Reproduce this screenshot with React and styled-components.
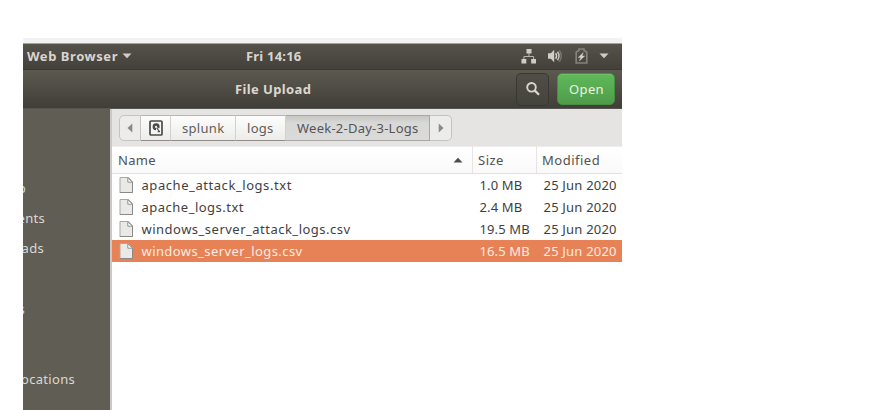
import React from "react";
import styled, { createGlobalStyle, css } from "styled-components";

const Global = createGlobalStyle`
  * { box-sizing: border-box; }
  body { margin: 0; background: #fff; overflow: hidden; }
`;

const Page = styled.main`
  width: 878px;
  height: 410px;
  padding: 38px 0 0 23px;
  font: 13px/18px "Noto Sans", "Open Sans", sans-serif;
  color: #4a4a4a;
  background: #fff;
  white-space: nowrap;
`;

const Screen = styled.div`
  width: 599px;
  height: 372px;
  overflow: hidden;
  display: flex;
  flex-direction: column;
`;

const Strip = styled.div`
  flex: none;
  height: 6px;
  background: #f3f3f3;
  border-bottom: 1px solid #a5a39e;
`;

const Label = styled.span`
  letter-spacing: ${(p) => p.$track ?? 0}px;
`;

const TopBar = styled.header`
  flex: none;
  height: 26px;
  display: grid;
  grid-template-columns: 223px 1fr 102px;
  align-items: center;
  padding: 0 0 1px 4px;
  color: #d8d5cf;
  font-weight: 700;
  background: linear-gradient(#55524a, #43413b);
  border-bottom: 1px solid #3a3833;
`;

const AppMenu = styled.div`
  display: flex;
  align-items: center;
  gap: 4px;
`;

const Clock = styled.div`
  margin-left: -4px;
`;

const Tray = styled.div`
  display: flex;
  align-items: center;
`;

const Icon = styled.svg`
  flex: none;
  display: block;
  margin-left: ${(p) => p.$gap ?? 0}px;
`;

const HeaderBar = styled.header`
  flex: none;
  height: 39px;
  display: grid;
  grid-template-columns: 1fr 33px 58px;
  column-gap: 8px;
  align-items: center;
  padding: 0 7px 0 0;
  background: linear-gradient(#5c594f, #403e38);
  border-bottom: 1px solid #56544e;
`;

const Title = styled.h1`
  margin: 0;
  padding-left: 212px;
  font: inherit;
  font-weight: 700;
  color: #dcd8d0;
`;

const SearchButton = styled.button`
  height: 33px;
  padding: 0 0 1px 1px;
  display: flex;
  align-items: center;
  justify-content: center;
  border: 1px solid #393732;
  border-radius: 5px;
  background: linear-gradient(#504e46, #45433d);
`;

const OpenButton = styled.button`
  height: 32px;
  padding: 0 0 0 1px;
  font: inherit;
  color: #eaf5e6;
  border: 1px solid #48903f;
  border-radius: 5px;
  background: linear-gradient(#5fb95a, #4f9c4a);
  box-shadow: inset 0 1px #6cc267;
`;

const Body = styled.div`
  flex: 1;
  display: grid;
  grid-template-columns: 89px 1fr;
`;

const Sidebar = styled.nav`
  background: #605d54;
  border-right: 2px solid #cbc8c5;
  color: #dbd8d1;
  display: flex;
  flex-direction: column;
  align-items: flex-start;
`;

const Place = styled.div`
  width: ${(p) => p.$width}px;
  height: 18px;
  margin-top: ${(p) => p.$before}px;
  display: flex;
  justify-content: flex-end;
  overflow: hidden;
`;

const Main = styled.section`
  min-width: 0;
  background: #fff;
`;

const PathBar = styled.div`
  height: 38px;
  padding: 6px 0 0 7px;
  background: #e5e4e2;
  border-bottom: 1px solid #ededec;
`;

const Path = styled.div`
  width: 333px;
  height: 26px;
  display: grid;
  grid-template-columns: 22px 30px 65px 50px 144px 22px;
`;

const Crumb = styled.button`
  padding: 0 0 0 ${(p) => p.$inset ?? 0}px;
  font: inherit;
  color: #5f5e5b;
  display: flex;
  align-items: center;
  justify-content: ${(p) => (p.$inset ? "flex-start" : "center")};
  border: 1px solid #b8b5b1;
  border-bottom-color: #908d89;
  border-left-width: 0;
  border-right-color: #d3d0cd;
  background: linear-gradient(#fdfdfd, #ececea);

  ${(p) => p.$current && css`
    background: linear-gradient(#c6c6c5, #d8d8d7 7px, #dadad9);
    border-color: #a9a7a4;
    color: #555;
  `}

  ${(p) => p.$end && css`
    background: #ececeb;
    border-color: #c5c3c0;
    border-radius: ${p.$end === "left" ? "5px 0 0 5px" : "0 5px 5px 0"};
    border-left-width: ${p.$end === "left" ? 1 : 0}px;
  `}
`;

const columns = css`
  display: grid;
  grid-template-columns: 360px 64px 1fr;
`;

const ColumnHeads = styled.div`
  ${columns}
  height: 27px;
  background: linear-gradient(#fff, #fafafa);
  border-bottom: 1px solid #e2e1e0;
`;

const Head = styled.div`
  display: flex;
  align-items: center;
  justify-content: space-between;
  padding: 0 9px 1px ${(p) => p.$inset}px;
  color: #525252;
  border-left: ${(p) => (p.$ruled ? "1px solid #e6e5e4" : "0")};
`;

const Rows = styled.div`
  padding-top: 0;
`;

const FileRow = styled.div`
  ${columns}
  height: 22px;
  align-items: center;
  padding-bottom: 1px;
  color: ${(p) => (p.$selected ? "#fdeae1" : "#3f3f3f")};
  background: ${(p) => (p.$selected ? "#e78256" : "transparent")};
`;

const FileName = styled.div`
  display: flex;
  align-items: center;
  gap: 7.5px;
  padding-left: 7px;
`;

const Cell = styled.div`
  padding-left: ${(p) => p.$inset}px;
`;

const Caret = ({ color = "#d0cdc7", up, gap }) => (
  <Icon width="10" height="6" viewBox="0 0 10 6" $gap={gap}>
    <path d={up ? "M0.5 5.5 5 0.8 9.5 5.5Z" : "M0.5 0.5 5 5.3 9.5 0.5Z"} fill={color} />
  </Icon>
);

const SideArrow = ({ left }) => (
  <Icon width="6" height="10" viewBox="0 0 6 10">
    <path d={left ? "M5.3 0.5V9.5L0.5 5Z" : "M0.7 0.5V9.5L5.5 5Z"} fill="#8b8985" />
  </Icon>
);

const NetworkIcon = () => (
  <Icon width="16" height="16" viewBox="0 0 16 16" fill="#d0cdc7" $gap={1}>
    <path d="M5.5 1h5v4.5h-5zM.5 11h4.8v4.5H.5zM10.2 11H15v4.5h-4.8z" />
    <path d="M8 5v3.5M2.9 11V8.5h9.7V11" fill="none" stroke="#b7b4ad" strokeWidth="1" />
  </Icon>
);

const VolumeIcon = () => (
  <Icon width="16" height="16" viewBox="0 0 16 16" $gap={10} fill="none">
    <path d="M1 5.2h2.8L7.2 1.8v12.4L3.8 10.8H1z" fill="#d0cdc7" />
    <path d="M8.7 5.2q1.7 2.8 0 5.6" stroke="#d0cdc7" strokeWidth="1.5" />
    <path d="M10.5 3.8q3 4.2 0 8.4" stroke="#c5c2bb" strokeWidth="1.5" />
    <path d="M12.3 2.2q4 5.8 0 11.6" stroke="#77746c" strokeWidth="1.5" />
  </Icon>
);

const BatteryIcon = () => (
  <Icon width="13" height="16" viewBox="0 0 13 16" $gap={12}>
    <path d="M4 2.3V1h5v1.3l2.8 1.9V15H1.2V4.2z" fill="none" stroke="#85827a" strokeWidth="1.7" />
    <path d="M8.3 4.6 3.2 9.5h2.6L4.3 13l5.4-5H7.1z" fill="#d5d2cb" stroke="#d5d2cb" strokeWidth=".4" />
  </Icon>
);

const SearchIcon = () => (
  <Icon width="14" height="14" viewBox="0 0 14 14" fill="none" stroke="#d9d5cd">
    <circle cx="5.5" cy="5.3" r="4.3" strokeWidth="1.9" />
    <path d="m8.6 8.4 4.4 4.4" strokeWidth="2.3" />
  </Icon>
);

const DiskIcon = () => (
  <Icon width="14" height="16" viewBox="0 0 14 16">
    <rect x="1" y="1" width="12" height="14" rx="1" fill="#f5f5f4" stroke="#4b4b4b" strokeWidth="1.7" />
    <path d="M7 10.2A3.5 3.5 0 1 1 10.6 7c0 .7-.2 1.1-.5 1.5L7.3 6.8z" fill="#4b4b4b" />
    <path d="m7.1 7 3.6 4.8M8.6 11.8h2.4" stroke="#4b4b4b" strokeWidth="1.1" />
    <circle cx="7" cy="6.9" r="1.1" fill="#f5f5f4" />
  </Icon>
);

const FileIcon = () => (
  <Icon width="15" height="16" viewBox="0 0 15 16">
    <path d="M1 .5h8.5l4 4.2v10.8H1z" fill="#e9e9e8" stroke="#a9a8a5" />
    <path d="M.8 15.5h12.9M13.5 5v10.5" stroke="#8b8a87" />
    <path d="M8.8.7V5.2H13.5z" fill="#fff" stroke="#92918e" />
  </Icon>
);

const places = [
  { text: "p", width: 3, before: 70 },
  { text: "ents", width: 22, before: 12 },
  { text: "ads", width: 21, before: 12 },
  { text: "s", width: 2, before: 43 },
  { text: "ocations", width: 52, before: 52 },
];

const files = [
  { name: "apache_attack_logs.txt", track: 0.56, size: "1.0 MB" },
  { name: "apache_logs.txt", track: 0.49, size: "2.4 MB" },
  { name: "windows_server_attack_logs.csv", track: 0.49, size: "19.5 MB" },
  { name: "windows_server_logs.csv", track: 0.42, size: "16.5 MB", selected: true },
];

export default function App() {
  return (
    <Page>
      <Global />
      <Screen>
        <Strip />
        <TopBar>
          <AppMenu>
            <Label $track={0.55}>Web Browser</Label>
            <Caret />
          </AppMenu>
          <Clock><Label $track={0.2}>Fri 14:16</Label></Clock>
          <Tray>
            <NetworkIcon />
            <VolumeIcon />
            <BatteryIcon />
            <Caret gap={11} />
          </Tray>
        </TopBar>
        <HeaderBar>
          <Title><Label $track={0.38}>File Upload</Label></Title>
          <SearchButton aria-label="Search"><SearchIcon /></SearchButton>
          <OpenButton><Label $track={0.4}>Open</Label></OpenButton>
        </HeaderBar>
        <Body>
          <Sidebar>
            {places.map((p) => (
              <Place key={p.text} $width={p.width} $before={p.before}>
                <Label $track={0.3}>{p.text}</Label>
              </Place>
            ))}
          </Sidebar>
          <Main>
            <PathBar>
              <Path>
                <Crumb $end="left" aria-label="Back"><SideArrow left /></Crumb>
                <Crumb aria-label="Disk"><DiskIcon /></Crumb>
                <Crumb $inset={11}><Label $track={0.3}>splunk</Label></Crumb>
                <Crumb $inset={11}><Label $track={0.3}>logs</Label></Crumb>
                <Crumb $inset={11} $current><Label $track={0.24}>Week-2-Day-3-Logs</Label></Crumb>
                <Crumb $end="right" aria-label="Forward"><SideArrow /></Crumb>
              </Path>
            </PathBar>
            <ColumnHeads>
              <Head $inset={6}><Label $track={0.3}>Name</Label><Caret up color="#4e4e4e" /></Head>
              <Head $inset={5} $ruled><Label $track={0.5}>Size</Label></Head>
              <Head $inset={5} $ruled><Label $track={0.5}>Modified</Label></Head>
            </ColumnHeads>
            <Rows>
              {files.map((f) => (
                <FileRow key={f.name} $selected={f.selected}>
                  <FileName><FileIcon /><Label $track={f.track}>{f.name}</Label></FileName>
                  <Cell $inset={7.5}><Label $track={0.12}>{f.size}</Label></Cell>
                  <Cell $inset={7.5}><Label $track={0.2}>25 Jun 2020</Label></Cell>
                </FileRow>
              ))}
            </Rows>
          </Main>
        </Body>
      </Screen>
    </Page>
  );
}
